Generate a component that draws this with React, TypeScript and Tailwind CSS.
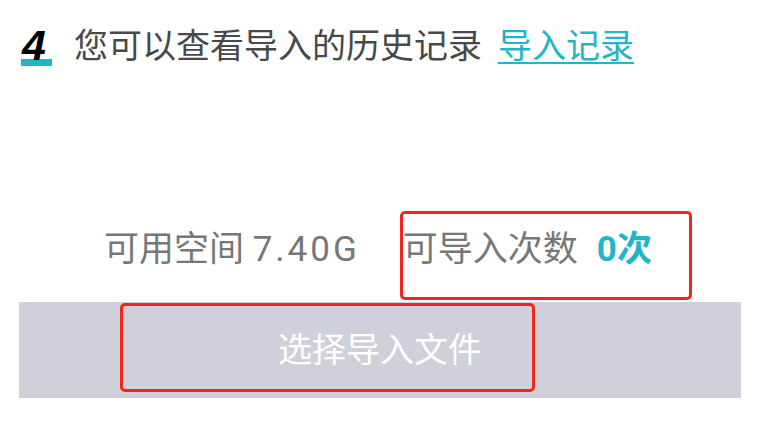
import React from "react";

const cjk = "font-['Roboto','Noto_Sans_CJK_SC',sans-serif]";

export default function App() {
  return (
    <div className={`w-[773px] h-[423px] bg-white overflow-hidden ${cjk}`}>
      <div className="flex items-center pt-[26px] pl-[21px]">
        <div className="relative w-[32px] h-[40px]">
          <div className="absolute left-0 top-[33px] w-[31px] h-[7px] bg-[#22b5c9]" />
          <span className="absolute left-[1px] top-[-4px] text-[43px] leading-[46px] font-bold italic text-black font-['Liberation_Sans',sans-serif]">
            4
          </span>
        </div>
        <span className="ml-[21px] text-[34px] leading-[40px] text-[#484848]">
          您可以查看导入的历史记录
        </span>
        <a className="ml-[16px] text-[34px] leading-[40px] text-[#22b5c9] underline underline-offset-[4px] decoration-[2px]">
          导入记录
        </a>
      </div>

      <div className="flex items-center mt-[164px] pl-[104px] text-[35px] leading-[40px] text-[#777777]">
        <span>
          可用空间 <span className="tracking-[3px]">7.40G</span>
        </span>
        <div className="relative ml-[43px] flex items-center">
          <span>可导入次数</span>
          <span className="ml-[19px] font-bold text-[#22b5c9]">0次</span>
          <div className="absolute left-[-3px] top-[-19px] w-[292px] h-[89px] border-[3px] border-[#f4261b] rounded-[5px]" />
        </div>
      </div>

      <div className="relative mt-[32px] ml-[19px] w-[722px] h-[96px] bg-[#cfd0da] flex items-center justify-center">
        <span className="text-[34px] leading-[40px] text-white">选择导入文件</span>
        <div className="absolute left-[101px] top-[1px] w-[415px] h-[89px] border-[3px] border-[#f4261b] rounded-[5px]" />
      </div>
    </div>
  );
}
